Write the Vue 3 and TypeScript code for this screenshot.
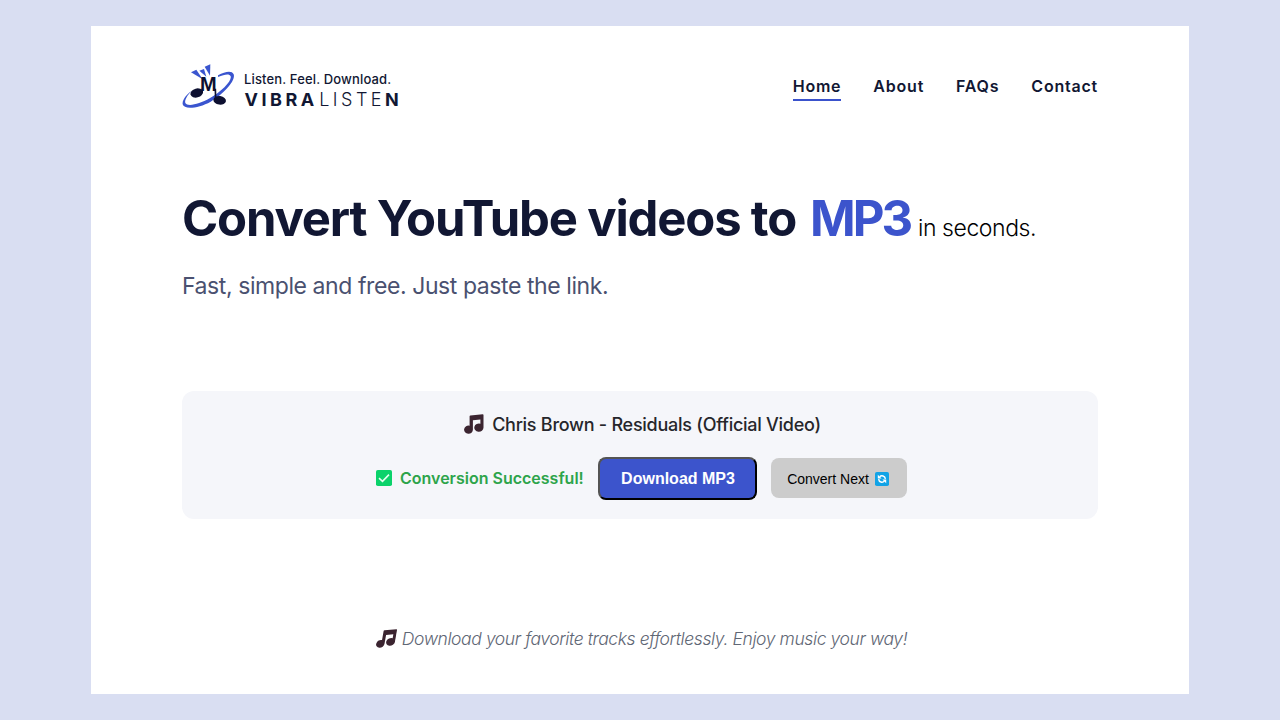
<script setup lang="ts">
import { ref } from 'vue'

interface NavLink {
  id: string
  label: string
}

const links: NavLink[] = [
  { id: 'home', label: 'Home' },
  { id: 'about', label: 'About' },
  { id: 'faqs', label: 'FAQs' },
  { id: 'contact', label: 'Contact' },
]
const active = ref('home')
</script>

<template>
  <div class="page">
    <div class="sheet">
      <header class="header">
        <div class="brand">
          <svg class="logo" viewBox="18 18 156 132" aria-hidden="true">
            <g fill="#3a55cf">
              <path d="M45 43L61 35L80 64Z" />
              <path d="M70 38L84 33L91 56Z" />
              <path d="M86 26L103 19L102 53Z" />
              <path d="M126 52C148 40 168 37 173 49C180 68 142 108 104 131C68 151 24 156 20 139C18 126 32 109 46 99C34 112 25 127 28 135C34 147 70 139 101 121C137 100 168 68 164 55C160 46 146 49 126 57Z" />
            </g>
            <g fill="#0d1030">
              <ellipse cx="62" cy="105" rx="19" ry="13.5" transform="rotate(-14 62 105)" />
              <ellipse cx="131" cy="127" rx="19" ry="13" transform="rotate(8 131 127)" />
            </g>
            <path d="M78.5 106V92M118 92L119 124" stroke="#0d1030" stroke-width="5" fill="none" />
            <text class="mark" x="72" y="99">M</text>
          </svg>
          <div class="brand-text">
            <div class="tagline">Listen. Feel. Download.</div>
            <div class="name"><b>VIBRA</b><span>LISTE</span><b>N</b></div>
          </div>
        </div>
        <nav class="nav">
          <a
            v-for="link in links"
            :key="link.id"
            class="link"
            :class="{ active: link.id === active }"
            @click="active = link.id"
          >{{ link.label }}</a>
        </nav>
      </header>

      <section class="hero">
        <div class="headline">
          <h1>Convert YouTube videos to</h1>
          <strong class="format">MP3</strong>
          <span class="after">in seconds.</span>
        </div>
        <p class="sub">Fast, simple and free. Just paste the link.</p>
      </section>

      <section class="card">
        <div class="track">
          <svg class="note" viewBox="0 0 20 20" aria-hidden="true">
            <path d="M5.6 2.2Q5.6 1.5 6.4 1.4L18.7 .2Q19.5 .2 19.5 .9V13.6A4.6 4.1 0 1 1 16.4 9.7V5.5L8.9 6.3V15.6A4.4 4.1 0 1 1 5.6 11.7Z" />
          </svg>
          <span>Chris Brown - Residuals (Official Video)</span>
        </div>
        <div class="result">
          <svg class="check" viewBox="0 0 16 16" aria-hidden="true">
            <rect width="16" height="16" rx="1.8" fill="#0bd26a" />
            <path d="M3 8.2L6.5 11.3L13 4.6" fill="none" stroke="#e5fff0" stroke-width="1.6" />
          </svg>
          <span class="status">Conversion Successful!</span>
          <button class="download">Download MP3</button>
          <button class="next">
            <span>Convert Next</span>
            <svg class="cycle" viewBox="0 0 14 14" aria-hidden="true">
              <rect width="14" height="14" rx="1.8" fill="#12a3e6" />
              <g fill="none" stroke="#fff" stroke-width="1.5">
                <path d="M4.6 4.7C6.5 3 9.9 3.6 10.4 6.8" />
                <path d="M9.4 9.3C7.5 11 4.1 10.4 3.6 7.2" />
              </g>
              <path d="M2.8 2.8V6.6H6.6ZM11.2 11.2V7.4H7.4Z" fill="#fff" />
            </svg>
          </button>
        </div>
      </section>

      <footer class="footer">
        <svg class="note slanted" viewBox="0 0 20 20" aria-hidden="true">
          <path d="M5.6 2.2Q5.6 1.5 6.4 1.4L18.7 .2Q19.5 .2 19.5 .9V13.6A4.6 4.1 0 1 1 16.4 9.7V5.5L8.9 6.3V15.6A4.4 4.1 0 1 1 5.6 11.7Z" />
        </svg>
        <em>Download your favorite tracks effortlessly. Enjoy music your way!</em>
      </footer>
    </div>
  </div>
</template>

<style>
body {
  margin: 0;
}
</style>

<style scoped>
.page {
  box-sizing: border-box;
  width: 1280px;
  height: 720px;
  padding: 26px 91px;
  background: #d9def2;
  font-family: Inter, sans-serif;
  color: #111733;
  white-space: nowrap;
}
.sheet {
  box-sizing: border-box;
  height: 668px;
  padding: 37px 91px 0;
  background: #fff;
}
.header {
  display: flex;
  justify-content: space-between;
  height: 50px;
}
.brand {
  display: flex;
  align-items: flex-start;
}
.logo {
  width: 52px;
  height: 44px;
  margin-top: 1px;
}
.mark {
  font: 700 60px "Liberation Sans", sans-serif;
  fill: #0d1030;
}
.brand-text {
  margin: 8px 0 0 10px;
}
.tagline {
  font-size: 13px;
  font-weight: 500;
  line-height: 16px;
  letter-spacing: 0.15px;
}
.name {
  display: flex;
  margin-top: 2px;
  padding-left: 0.5px;
  font-size: 18px;
  line-height: 22px;
  letter-spacing: 3.5px;
}
.name b {
  font-weight: 750;
}
.name span {
  margin-left: 1.5px;
  font-weight: 300;
}
.nav {
  display: flex;
  gap: 32px;
  padding-top: 13px;
}
.link {
  height: 20px;
  padding-bottom: 3px;
  border-bottom: 2px solid transparent;
  font-size: 16px;
  font-weight: 600;
  line-height: 20px;
  letter-spacing: 0.78px;
  cursor: pointer;
}
.link.active {
  border-color: #3a52cc;
}
.hero {
  margin-top: 76px;
}
.headline {
  display: flex;
  align-items: baseline;
  height: 60px;
  line-height: 60px;
}
.headline h1 {
  width: 628px;
  margin: 0;
  font-size: 49px;
  font-weight: 750;
  letter-spacing: -1.17px;
}
.format {
  width: 108px;
  font-size: 49px;
  font-weight: 750;
  letter-spacing: -3px;
  color: #3c54cc;
}
.after {
  font-size: 23px;
  font-weight: 300;
  letter-spacing: -0.43px;
  color: #000;
}
.sub {
  margin: 22px 0 0;
  font-size: 23px;
  line-height: 31px;
  letter-spacing: -0.42px;
  color: #4a5170;
}
.card {
  box-sizing: border-box;
  height: 128px;
  margin-top: 89px;
  padding-top: 20px;
  border-radius: 12px;
  background: #f5f6fa;
}
.track {
  display: flex;
  justify-content: center;
  align-items: center;
  gap: 8px;
  height: 27px;
  padding-left: 5px;
  font-size: 18px;
  font-weight: 500;
  line-height: 27px;
  letter-spacing: -0.26px;
  color: #26262b;
}
.note {
  width: 20px;
  height: 20px;
  margin-bottom: 2px;
  fill: #3b2430;
}
.result {
  display: flex;
  justify-content: center;
  align-items: center;
  height: 42px;
  margin-top: 19px;
  padding-left: 3px;
}
.check {
  width: 16px;
  height: 16px;
  margin-right: 8px;
}
.status {
  width: 183px;
  margin-right: 15px;
  font-size: 16px;
  font-weight: 600;
  color: #2da44a;
}
.download {
  box-sizing: border-box;
  width: 159px;
  height: 43px;
  margin-right: 14px;
  padding: 1px 0 0 1px;
  border: 2px outset #000;
  border-radius: 8px;
  background: #3c54cc;
  color: #fff;
  font: 700 16px "Liberation Sans", sans-serif;
}
.next {
  display: flex;
  justify-content: center;
  align-items: center;
  gap: 6px;
  width: 136px;
  height: 40px;
  padding: 2px 2px 0 0;
  box-sizing: border-box;
  border: 0;
  border-radius: 8px;
  background: #ccc;
  color: #000;
  font: 14px "Liberation Sans", sans-serif;
}
.cycle {
  width: 14px;
  height: 14px;
}
.footer {
  display: flex;
  justify-content: center;
  align-items: center;
  gap: 6px;
  height: 26px;
  margin-top: 107px;
  padding-left: 4px;
  font-size: 17.5px;
  font-weight: 300;
  line-height: 26px;
  letter-spacing: -0.4px;
  color: #5f6775;
}
.slanted {
  width: 19px;
  height: 19px;
  transform: skewX(-10deg);
}
</style>
